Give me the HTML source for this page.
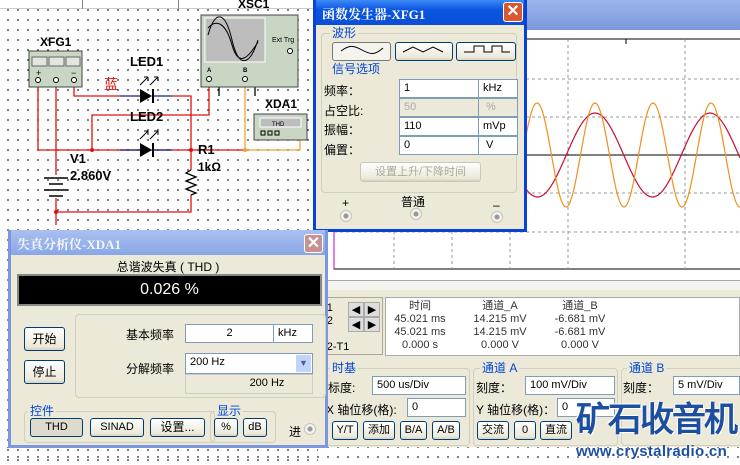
<!DOCTYPE html>
<html><head><meta charset="utf-8"><style>
*{margin:0;padding:0;box-sizing:border-box}
body{width:740px;height:465px;overflow:hidden;position:relative;background:#fff;font-family:"Liberation Sans","WenQuanYi Zen Hei",sans-serif;font-size:12px;color:#000}
.dots{position:absolute;left:0;top:0;width:740px;height:465px;background-image:radial-gradient(circle,#555 0.8px,transparent 1px);background-size:10px 10px;background-position:3px 5px}
.a{position:absolute}
.win{position:absolute;background:#ece9d8;border:3px solid #0842d8;border-top:none}
.tb{position:absolute;left:0;right:0;top:0;height:25px;background:linear-gradient(#3d8af7,#0a55e0 40%,#0a4fd6);color:#fff;font-weight:bold;font-size:13px;padding:4px 6px;font-family:"Liberation Serif","Noto Serif CJK SC",serif}
.cls{position:absolute;width:20px;height:20px;border:1px solid #fff;border-radius:3px;background:#d9582f;color:#fff;font-size:16px;line-height:18px;text-align:center;font-weight:bold}
.inp{position:absolute;background:#fff;border:1px solid #7f9db9;font-size:11px;padding:2px 4px;height:19px}
.btn{position:absolute;border:1px solid #003c74;border-radius:3px;background:linear-gradient(#fff,#ece9d8 85%,#d6d0c0);text-align:center;font-size:11px;line-height:17px}
.grp{position:absolute;border:1px solid #d0d0bf;border-radius:4px}
.gl{position:absolute;color:#0046d5;background:#ece9d8;font-size:12px;padding:0 2px;line-height:13px}
.rad{position:absolute;width:12px;height:12px;border-radius:50%;border:1px solid #c8c4b4;background:radial-gradient(circle,#999 2px,#f4f3ee 3px)}
</style></head><body>
<div class="dots"></div>
<!-- top strip -->
<div class="a" style="left:0;top:0;width:320px;height:9px;background:#fff;border-bottom:1px solid #ccc"></div>
<div class="a" style="left:82px;top:0;width:1px;height:9px;background:#888"></div>
<div class="a" style="left:178px;top:0;width:1px;height:9px;background:#888"></div>
<div class="a" style="left:238px;top:-3px;font-weight:bold;font-size:12px">XSC1</div>
<svg class="a" style="left:0;top:0" width="320" height="230" font-family="Liberation Sans" font-weight="bold">
<g fill="none" stroke-width="1.3">
<path d="M38 80V150H245" stroke="#e01010"/>
<path d="M245 150H300V135" stroke="#f0a030"/>
<path d="M245 80V150" stroke="#f0a030"/>
<path d="M56 80V175M56 198V225" stroke="#e01010"/>
<path d="M74 80V96H120" stroke="#e01010"/>
<path d="M120 96H140M152 96H172" stroke="#102080"/>
<path d="M172 96H191V170M191 195V212H56" stroke="#e01010"/>
<path d="M92 150V115H209V78" stroke="#e01010"/>
<path d="M120 150H140M152 150H172" stroke="#102080"/>
<path d="M191 170l-5 3l10 4l-10 4l10 4l-10 4l10 4l-5 2" stroke="#000"/>
<path d="M219 78V96M255 78V96" stroke="#000"/>
<path d="M44 178H68M49 184H63M44 190H68M49 196H63" stroke="#000" stroke-width="1.5"/>
<path d="M196 95H230M200 110H240" stroke="#000" opacity="0"/>
</g>
<polygon points="140,89 140,103 152,96" fill="#000"/><rect x="152" y="89" width="2" height="14"/>
<polygon points="140,143 140,157 152,150" fill="#000"/><rect x="152" y="143" width="2" height="14"/>
<g stroke="#000" fill="none"><path d="M140 85l8-8m0 0h-4m4 0v4M150 85l8-8m0 0h-4m4 0v4M140 139l8-8m0 0h-4m4 0v4M150 139l8-8m0 0h-4m4 0v4"/></g>
<g fill="#e01010"><circle cx="92" cy="150" r="2"/><circle cx="191" cy="150" r="2"/><circle cx="56" cy="212" r="2"/></g><circle cx="245" cy="150" r="2" fill="#f0a030"/>
<text x="40" y="46" font-size="12">XFG1</text>
<rect x="29" y="51" width="53" height="36" fill="#c9d6c4" stroke="#444"/>
<rect x="32" y="57" width="15" height="9" fill="#e0e6e0" stroke="#666"/><rect x="49" y="57" width="15" height="9" fill="#e0e6e0" stroke="#666"/><rect x="66" y="57" width="14" height="9" fill="#e0e6e0" stroke="#666"/>
<g font-size="9" font-weight="normal"><text x="36" y="76">+</text><text x="71" y="76">−</text></g>
<g fill="#fff" stroke="#000"><circle cx="38" cy="80" r="2.5"/><circle cx="56" cy="80" r="2.5"/><circle cx="74" cy="80" r="2.5"/></g>
<text x="130" y="66" font-size="13">LED1</text><text x="130" y="121" font-size="13">LED2</text>
<text x="104" y="89" font-size="14" font-weight="normal" fill="#e01010" font-family="WenQuanYi Zen Hei">蓝</text>
<text x="70" y="163" font-size="13">V1</text><text x="70" y="180" font-size="13">2.860V</text>
<text x="198" y="154" font-size="13">R1</text><text x="198" y="171" font-size="12">1kΩ</text>
<rect x="201" y="15" width="97" height="72" fill="#c9d6c4" stroke="#444"/>
<rect x="205" y="18" width="60" height="44" fill="#bdbdbd" stroke="#fff"/>
<path d="M208 35C215 10 225 10 232 40S250 65 258 40M208 28C215 20 225 20 232 45S250 55 258 42" stroke="#000" fill="none"/>
<text x="272" y="42" font-size="7" font-weight="normal">Ext Trg</text>
<text x="207" y="72" font-size="6">A</text><text x="243" y="72" font-size="6">B</text>
<g fill="#fff" stroke="#000"><circle cx="209" cy="79" r="2.5"/><circle cx="245" cy="79" r="2.5"/><circle cx="290" cy="51" r="2.5"/></g>
<text x="265" y="108" font-size="12">XDA1</text>
<rect x="254" y="114" width="53" height="26" fill="#c9d6c4" stroke="#444"/>
<rect x="260" y="118" width="41" height="9" fill="#bdbdbd" stroke="#fff"/><text x="272" y="126" font-size="6" font-weight="normal">THD</text>
<g fill="none" stroke="#000"><rect x="261" y="131" width="4" height="4"/><rect x="268" y="131" width="4" height="4"/><rect x="275" y="131" width="4" height="4"/></g>
</svg>
<!-- scope window -->
<div class="a" style="left:318px;top:0;width:422px;height:447px;background:#ece9d8;border-left:3px solid #0842d8"></div>
<div class="a" style="left:527px;top:0;width:213px;height:30px;background:linear-gradient(#9cb6ec,#7c98dc)"></div>
<div class="a" style="left:327px;top:30px;width:413px;height:250px;background:#fff"></div>
<svg class="a" style="left:327px;top:30px" width="413" height="250">
<rect x="7" y="9" width="410" height="230" fill="none" stroke="#000"/>
<line x1="7" y1="9" x2="7" y2="239" stroke="#c000c0"/>
<g stroke="#999" stroke-dasharray="3,3"><path d="M125 9V239M183 9V239M241 9V239M358 9V239M67 9V239M7 49H413M7 87H413M7 163H413M7 202H413"/></g>
<line x1="7" y1="125" x2="413" y2="125" stroke="#000"/><line x1="299" y1="9" x2="299" y2="14" stroke="#000"/>
<path id="rw" fill="none" stroke="#c81030" stroke-width="1.2"/><path id="ow" fill="none" stroke="#f09020" stroke-width="1.2"/>
</svg>
<div class="a" style="left:327px;top:280px;width:413px;height:10px;background:#f4f3ee;border-top:1px solid #aaa"></div>
<div class="a" style="left:320px;top:297px;width:63px;height:58px;border:1px solid #aca899"></div>
<div class="a" style="left:320px;top:302px;line-height:13px;font-size:11px">T1<br>T2<br><br>T2-T1</div>
<div class="a" style="left:348px;top:302px;font-size:11px;line-height:14px">
<span style="display:inline-block;width:16px;height:15px;background:#ddd;border:1px solid #aaa;text-align:center">◀</span><span style="display:inline-block;width:16px;height:15px;background:#ddd;border:1px solid #aaa;text-align:center">▶</span><br>
<span style="display:inline-block;width:16px;height:15px;background:#ddd;border:1px solid #aaa;text-align:center">◀</span><span style="display:inline-block;width:16px;height:15px;background:#ddd;border:1px solid #aaa;text-align:center">▶</span></div>
<div class="a" style="left:385px;top:297px;width:355px;height:59px;background:#fff;border:1px solid #aaa;font-size:11px;line-height:13px;color:#333">
<div class="a" style="left:4px;top:2px;width:60px;text-align:center">时间<br>45.021 ms<br>45.021 ms<br>0.000 s</div>
<div class="a" style="left:84px;top:2px;width:60px;text-align:center">通道_A<br>14.215 mV<br>14.215 mV<br>0.000 V</div>
<div class="a" style="left:164px;top:2px;width:60px;text-align:center">通道_B<br>-6.681 mV<br>-6.681 mV<br>0.000 V</div></div>
<div class="grp" style="left:322px;top:368px;width:148px;height:78px"></div><div class="gl" style="left:330px;top:362px">时基</div>
<div class="grp" style="left:473px;top:368px;width:145px;height:78px"></div><div class="gl" style="left:480px;top:362px">通道 A</div>
<div class="grp" style="left:621px;top:368px;width:125px;height:78px"></div><div class="gl" style="left:627px;top:362px">通道 B</div>
<div class="a" style="left:328px;top:379px">标度:</div><div class="inp" style="left:372px;top:376px;width:94px">500 us/Div</div>
<div class="a" style="left:326px;top:401px">X 轴位移(格):</div><div class="inp" style="left:407px;top:398px;width:59px">0</div>
<div class="btn" style="left:332px;top:421px;width:26px">Y/T</div><div class="btn" style="left:363px;top:421px;width:32px">添加</div><div class="btn" style="left:400px;top:421px;width:27px">B/A</div><div class="btn" style="left:432px;top:421px;width:28px">A/B</div>
<div class="a" style="left:476px;top:379px">刻度：</div><div class="inp" style="left:525px;top:376px;width:90px">100 mV/Div</div>
<div class="a" style="left:476px;top:401px">Y 轴位移(格)：</div><div class="inp" style="left:557px;top:398px;width:58px">0</div>
<div class="btn" style="left:477px;top:421px;width:32px">交流</div><div class="btn" style="left:514px;top:421px;width:22px">0</div><div class="btn" style="left:540px;top:421px;width:32px">直流</div>
<div class="a" style="left:623px;top:379px">刻度：</div><div class="inp" style="left:673px;top:376px;width:67px">5 mV/Div</div>
<!-- watermark -->
<div class="a" style="left:576px;top:400px;width:164px;height:45px;font-family:'WenQuanYi Zen Hei',sans-serif;font-size:34px;font-weight:bold;color:#1d4fa0;letter-spacing:-2px;line-height:40px;text-shadow:1px 1px 0 #fff,-1px -1px 0 #fff">矿石收音机</div>
<div class="a" style="left:318px;top:447px;width:422px;height:18px;background:#fff"></div>
<div class="a" style="left:0;top:447px;width:740px;height:18px;background-image:radial-gradient(circle,#555 0.8px,transparent 1px);background-size:10px 10px;background-position:3px 5px"></div>
<div class="a" style="left:576px;top:443px;font-size:15px;font-weight:bold;color:#1d4fa0;letter-spacing:0.3px;text-shadow:0 0 2px #fff">www.crystalradio.cn</div>
<!-- FG window -->
<div class="win" style="left:313px;top:0;width:214px;height:232px">
<div class="tb" style="left:0;right:0">函数发生器-XFG1</div>
<div class="cls" style="left:187px;top:2px">✕</div>
<div class="grp" style="left:5px;top:33px;width:196px;height:160px"></div>
<div class="gl" style="left:14px;top:27px">波形</div>
<div class="btn" style="left:16px;top:42px;width:59px;height:19px;background:#f4f3ee;border-color:#777"><svg width="50" height="12"><path d="M4 8C12 2 16 2 25 7S38 12 46 5" fill="none" stroke="#000"/></svg></div>
<div class="btn" style="left:79px;top:42px;width:58px;height:19px"><svg width="50" height="12"><path d="M4 9L14 4L24 9L34 4L44 9" fill="none" stroke="#000"/></svg></div>
<div class="btn" style="left:140px;top:42px;width:60px;height:19px"><svg width="52" height="12"><path d="M4 9H14V3H24V9H32V3H42V9H50" fill="none" stroke="#000"/></svg></div>
<div class="gl" style="left:14px;top:63px">信号选项</div>
<div class="a" style="left:8px;top:82px;line-height:19.5px;font-size:12px">频率：<br>占空比:<br>振幅：<br>偏置：</div>
<div class="inp" style="left:83px;top:79px;width:80px;height:19px">1</div><div class="inp" style="left:162px;top:79px;width:40px;height:19px">kHz</div>
<div class="inp" style="left:83px;top:98px;width:80px;height:19px;background:#ece9d8;color:#aaa">50</div><div class="inp" style="left:162px;top:98px;width:40px;height:19px;background:#ece9d8;color:#aaa">&nbsp;%</div>
<div class="inp" style="left:83px;top:117px;width:80px;height:19px">110</div><div class="inp" style="left:162px;top:117px;width:40px;height:19px">mVp</div>
<div class="inp" style="left:83px;top:136px;width:80px;height:19px">0</div><div class="inp" style="left:162px;top:136px;width:40px;height:19px">&nbsp;V</div>
<div class="btn" style="left:44px;top:162px;width:121px;height:20px;color:#aca899;border-color:#c9c7ba;line-height:18px">设置上升/下降时间</div>
<div class="a" style="left:85px;top:193px">普通</div>
<div class="a" style="left:26px;top:196px">+</div><div class="a" style="left:177px;top:198px">–</div>
<div class="rad" style="left:24px;top:210px"></div><div class="rad" style="left:94px;top:208px"></div><div class="rad" style="left:175px;top:211px"></div>
</div>
<!-- Distortion window -->
<div class="win" style="left:8px;top:230px;width:320px;height:218px;border-color:#7b97df">
<div class="tb" style="background:linear-gradient(#a9c0f0,#8aa6e6);color:#f4f6fc">失真分析仪-XDA1</div>
<div class="cls" style="left:293px;top:4px;width:19px;height:19px;background:#c89292">✕</div>
<div class="a" style="left:0;width:314px;top:28px;text-align:center;font-size:12px">总谐波失真 ( THD )</div>
<div class="a" style="left:6px;top:44px;width:305px;height:32px;background:#000;border:2px solid #888;color:#fff;text-align:center;font-size:16px;line-height:28px">0.026 %</div>
<div class="grp" style="left:64px;top:84px;width:251px;height:84px"></div>
<div class="btn" style="left:13px;top:97px;width:41px;height:24px;line-height:22px;font-size:12px">开始</div>
<div class="btn" style="left:13px;top:130px;width:41px;height:24px;line-height:22px;font-size:12px">停止</div>
<div class="a" style="left:115px;top:96px">基本频率</div>
<div class="inp" style="left:174px;top:94px;width:89px;text-align:center">2</div><div class="inp" style="left:262px;top:94px;width:40px">kHz</div>
<div class="a" style="left:115px;top:130px">分解频率</div>
<div class="inp" style="left:174px;top:123px;width:128px;height:21px">200 Hz<span style="position:absolute;right:1px;top:1px;width:15px;height:17px;background:#c1d3fb;color:#4d6185;font-size:9px;text-align:center;line-height:17px">▼</span></div>
<div class="inp" style="left:174px;top:144px;width:128px;height:20px;background:#ece9d8;border-color:#ccc;text-align:center;padding-left:40px">200 Hz</div>
<div class="grp" style="left:13px;top:181px;width:191px;height:32px"></div><div class="gl" style="left:17px;top:175px">控件</div>
<div class="grp" style="left:199px;top:181px;width:66px;height:32px"></div><div class="gl" style="left:204px;top:175px">显示</div>
<div class="btn" style="left:19px;top:188px;width:53px;background:#dedbce">THD</div>
<div class="btn" style="left:79px;top:188px;width:54px">SINAD</div>
<div class="btn" style="left:139px;top:188px;width:55px;font-size:12px">设置...</div>
<div class="btn" style="left:203px;top:188px;width:24px">%</div>
<div class="btn" style="left:232px;top:188px;width:24px">dB</div>
<div class="a" style="left:278px;top:193px;font-size:12px">进</div><div class="rad" style="left:293px;top:193px"></div>
</div>
<script>
function w(id,amp,per){var d="";for(var x=7;x<=413;x+=1){var X=x+327;var y=125-amp*Math.cos(2*Math.PI*(X-595)/per);d+=(x==7?"M":"L")+x+" "+y.toFixed(1)+" ";}document.getElementById(id).setAttribute("d",d);}
w("rw",42,115);w("ow",52,58);
</script>
</body></html>
